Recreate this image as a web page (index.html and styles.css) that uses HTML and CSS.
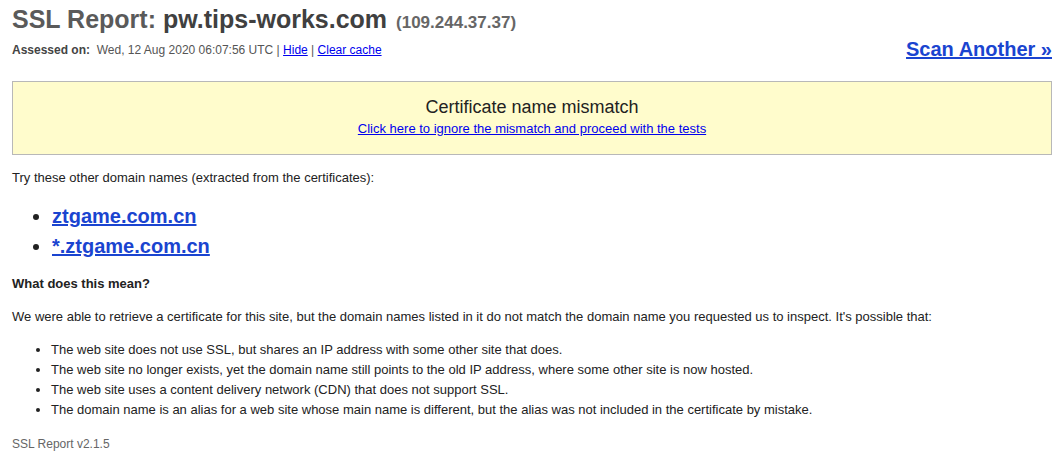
FILE: index.html
```html
<!DOCTYPE html>
<html lang="en">
  <head>
    <meta charset="UTF-8" />
    <title>SSL Report: pw.tips-works.com</title>
    <link rel="stylesheet" href="styles.css">
  </head>
  <body>
    <div class="page">
      <h1 class="title">
        <span class="title-label">SSL Report:</span>
        <span class="title-host">pw.tips-works.com</span>
        <span class="title-ip">(109.244.37.37)</span>
      </h1>

      <div class="report-bar">
        <div class="assessed">
          <b>Assessed on:</b>&nbsp; Wed, 12 Aug 2020 06:07:56 UTC |
          <a href="#">Hide</a> | <a href="#">Clear cache</a>
        </div>
        <a class="scan-another" href="#">Scan Another &raquo;</a>
      </div>

      <div class="warning-box">
        <div class="warning-title">Certificate name mismatch</div>
        <a href="#">Click here to ignore the mismatch and proceed with the tests</a>
      </div>

      <p class="text">Try these other domain names (extracted from the certificates):</p>

      <ul class="domains">
        <li><a href="#">ztgame.com.cn</a></li>
        <li><a href="#">*.ztgame.com.cn</a></li>
      </ul>

      <p class="text"><b>What does this mean?</b></p>

      <p class="text">We were able to retrieve a certificate for this site, but the domain names listed in it do not match the domain name you requested us to inspect. It's possible that:</p>

      <ul class="reasons">
        <li>The web site does not use SSL, but shares an IP address with some other site that does.</li>
        <li>The web site no longer exists, yet the domain name still points to the old IP address, where some other site is now hosted.</li>
        <li>The web site uses a content delivery network (CDN) that does not support SSL.</li>
        <li>The domain name is an alias for a web site whose main name is different, but the alias was not included in the certificate by mistake.</li>
      </ul>

      <div class="footer">SSL Report v2.1.5</div>
    </div>
  </body>
</html>
```

FILE: styles.css
```css
body {
  font-family: "Liberation Sans", Arial, sans-serif;
  font-size: 13px;
  color: #222;
  background: white;
  margin: 0;
  padding: 0;
}
a {
  color: #0000ee;
}
.page {
  margin: 0 8px 0 12px;
}
.title {
  margin: 0;
  padding-top: 4px;
  font-size: 25px;
  line-height: 30px;
  font-weight: bold;
}
.title-label {
  color: #5a5a5a;
}
.title-host {
  color: #404040;
}
.title-ip {
  color: #666;
  font-size: 17px;
  margin-left: 2px;
}
.report-bar {
  display: flex;
  justify-content: space-between;
  align-items: center;
}
.assessed {
  font-size: 12px;
  color: #555;
}
.assessed b {
  color: #444;
}
.scan-another {
  font-size: 20px;
  font-weight: bold;
  color: #1a44d0;
}
.warning-box {
  margin-top: 20px;
  background: #fffccc;
  border: 1px solid #b8b8b8;
  text-align: center;
  padding: 14px 0 18px;
}
.warning-title {
  font-size: 18px;
  color: #222;
  line-height: 22px;
  margin-bottom: 3px;
}
.warning-box a {
  font-size: 13px;
}
.text {
  margin: 0;
  line-height: 18px;
}
.warning-box + .text {
  margin-top: 14px;
}
.domains {
  margin: 14px 0 14px;
  padding-left: 40px;
}
.domains li {
  font-size: 20px;
  line-height: 30px;
}
.domains a {
  font-weight: bold;
  color: #1a44d0;
}
.domains + .text {
  margin-bottom: 15px;
}
.reasons {
  margin: 14px 0 17px;
  padding-left: 39px;
}
.reasons li {
  line-height: 20px;
}
.footer {
  font-size: 12px;
  color: #666;
}
```
